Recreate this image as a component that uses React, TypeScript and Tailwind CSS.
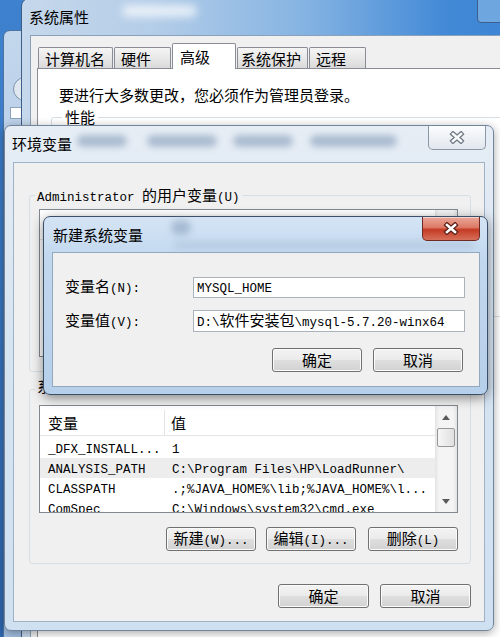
import React from "react";

// CJK runs get the wide face, everything else the half-width mono face (like SimSun)
const CJK = /([\u2E80-\u9FFF\u3000-\u303F\uFF00-\uFFEF]+)/;

function T({ s }: { s: string }) {
  return (
    <span className="whitespace-pre leading-[16px]">
      {s.split(CJK).map((part, i) =>
        part === "" ? null : CJK.test(part) ? (
          <span key={i} className="font-['Noto_Sans_CJK_SC',sans-serif] text-[15px] leading-[16px]">
            {part}
          </span>
        ) : (
          <span key={i} className="font-['Liberation_Mono','Noto_Sans_CJK_SC',monospace] text-[12.5px] leading-[16px]">
            {part}
          </span>
        )
      )}
    </span>
  );
}

function CloseX({ fill, stroke }: { fill: string; stroke: string }) {
  return (
    <svg width="16" height="13" viewBox="0 0 16 13">
      <path d="M4 3 L12 10 M12 3 L4 10" stroke={stroke} strokeWidth="5" strokeLinecap="square" fill="none" />
      <path d="M4 3 L12 10 M12 3 L4 10" stroke={fill} strokeWidth="2.6" strokeLinecap="square" fill="none" />
    </svg>
  );
}

function Btn({ label, className = "" }: { label: string; className?: string }) {
  return (
    <div
      className={`flex h-[24px] shrink-0 items-center justify-center rounded-[3px] border border-[#707070] bg-[linear-gradient(180deg,#f3f3f3_0%,#ebebeb_48%,#dedede_52%,#d2d2d2_100%)] text-black shadow-[inset_0_0_0_1px_#fbfbfb] ${className}`}
    >
      <T s={label} />
    </div>
  );
}

function Arrow({ up }: { up?: boolean }) {
  return (
    <svg width="8" height="5" viewBox="0 0 8 5">
      <path d={up ? "M0 5 L4 0 L8 5 Z" : "M0 0 L4 5 L8 0 Z"} fill="#5b5b5b" />
    </svg>
  );
}

const rows = [
  { name: "_DFX_INSTALL...", value: "1" },
  { name: "ANALYSIS_PATH", value: "C:\\Program Files\\HP\\LoadRunner\\" },
  { name: "CLASSPATH", value: ".;%JAVA_HOME%\\lib;%JAVA_HOME%\\l..." },
  { name: "ComSpec", value: "C:\\Windows\\system32\\cmd.exe" },
];

function Scrollbar() {
  return (
    <div className="flex w-[22px] flex-col bg-[linear-gradient(90deg,#e3e3e3_0%,#f4f4f4_18%,#f4f4f4_82%,#e3e3e3_100%)]">
      <div className="flex h-[22px] items-center justify-center">
        <Arrow up />
      </div>
      <div className="mx-[2px] h-[19px] rounded-[2px] border border-[#979797] bg-[linear-gradient(90deg,#f6f6f6,#e0e0e0)]" />
      <div className="flex-1" />
      <div className="flex h-[22px] items-center justify-center">
        <Arrow />
      </div>
    </div>
  );
}

function SystemProperties() {
  const tabs = [
    { label: "计算机名", w: "w-[75px] pl-[6px]" },
    { label: "硬件", w: "w-[57px] pl-[6px]" },
    { label: "高级", w: "w-[64px] pl-[7px]", active: true },
    { label: "系统保护", w: "w-[71px] pl-[3px]" },
    { label: "远程", w: "w-[57px] pl-[6px]" },
  ];
  return (
    <div className="absolute left-[21px] top-[-2px] flex h-[690px] w-[520px] flex-col rounded-t-[8px] border border-[#3f5d86] bg-[linear-gradient(90deg,#c6d8eb_0%,#b4cde8_25%,#84b3e2_55%,#4289d6_82%,#3b84d4_100%)]">
      <div className="relative h-[36px] shrink-0">
        <div className="absolute left-[100px] top-[6px] h-[12px] w-[75px] rounded-full bg-white/70 blur-[4px]" />
        <div className="relative flex h-full items-center pl-[7px]">
          <T s="系统属性" />
        </div>
        <div className="absolute left-[455px] top-[-1px] h-[25px] w-[50px] rounded-b-[4px] border border-[#3b5f90] bg-[#6ea6df]" />
      </div>
      <div className="flex-1 px-[8px]">
        <div className="flex h-full flex-col border border-[#8aa1bb] bg-[#f0f0f0] pl-[6px] pt-[7px]">
          <div className="flex h-[25px] shrink-0 items-end gap-[1px] pl-[1px]">
            {tabs.map((t) =>
              t.active ? (
                <div
                  key={t.label}
                  className={`relative z-10 -mb-[1px] flex h-[26px] items-center rounded-t-[2px] border border-b-0 border-[#898c95] bg-white ${t.w}`}
                >
                  <T s={t.label} />
                </div>
              ) : (
                <div
                  key={t.label}
                  className={`flex h-[21px] items-center rounded-t-[2px] border border-b-0 border-[#898c95] bg-[linear-gradient(180deg,#f5f5f5_0%,#e8e8e8_50%,#dadada_100%)] pt-[1px] ${t.w}`}
                >
                  <T s={t.label} />
                </div>
              )
            )}
          </div>
          <div className="flex-1 border border-[#898c95] bg-white">
            <div className="pl-[21px] pt-[18px]">
              <T s="要进行大多数更改，您必须作为管理员登录。" />
            </div>
            <div className="relative ml-[13px] mr-[12px] mt-[14px] h-[200px] rounded-[3px] border border-[#d5dfe5]">
              <div className="absolute left-[10px] top-[-9px] bg-white px-[3px]">
                <T s="性能" />
              </div>
            </div>
            <div className="ml-[10px] mt-[327px] flex items-start">
              <div className="w-[272px] pt-[3px] text-[#555]">
                <T s="启动和故障恢复" />
              </div>
              <Btn label="设置(T)..." className="w-[90px]" />
            </div>
          </div>
        </div>
      </div>
    </div>
  );
}

function EnvWindow() {
  return (
    <div className="absolute left-[4px] top-[125px] flex h-[506px] w-[490px] flex-col rounded-[7px] border border-[#71859c] bg-[linear-gradient(180deg,#e6edf5_0%,#d7e4f1_40%,#cfe0f1_100%)] shadow-[0_2px_10px_rgba(0,0,0,0.35)]">
      <div className="relative h-[36px] shrink-0">
        <div className="absolute left-[72px] top-[9px] h-[12px] w-[50px] rounded-full bg-[#9db1c8]/80 blur-[3px]" />
        <div className="absolute left-[142px] top-[9px] h-[12px] w-[70px] rounded-full bg-[#9db1c8]/80 blur-[3px]" />
        <div className="absolute left-[228px] top-[9px] h-[12px] w-[60px] rounded-full bg-[#9db1c8]/80 blur-[3px]" />
        <div className="absolute left-[305px] top-[9px] h-[12px] w-[87px] rounded-full bg-[#9db1c8]/80 blur-[3px]" />
        <div className="relative flex h-full items-center pl-[7px]">
          <T s="环境变量" />
        </div>
        <div className="absolute left-[423px] top-[0px] flex h-[24px] w-[58px] items-center justify-center rounded-b-[5px] border border-t-0 border-[#8b97a5] bg-[linear-gradient(180deg,#fbfcfd_0%,#eef2f6_50%,#e1e7ee_100%)]">
          <CloseX fill="#f7f9fb" stroke="#6e7782" />
        </div>
      </div>
      <div className="mx-[8px] h-[460px] border border-[#9fb1c5] bg-[#f0f0f0]">
        {/* user variables (list hidden behind the dialog) */}
        <div className="relative ml-[15px] mt-[32px] h-[177px] w-[442px] rounded-[3px] border border-[#d5dfe5]">
          <div className="absolute left-[5px] top-[-9px] bg-[#f0f0f0] px-[2px]">
            <T s="Administrator 的用户变量(U)" />
          </div>
          <div className="ml-[9px] mt-[13px] flex h-[148px] w-[419px] border border-[#828790] bg-white">
            <div className="h-[30px] flex-1 border-b border-[#e5e5e5]" />
            <Scrollbar />
          </div>
        </div>
        {/* system variables */}
        <div className="relative ml-[15px] mt-[17px] h-[175px] w-[442px] rounded-[3px] border border-[#d5dfe5]">
          <div className="absolute left-[5px] top-[-12px] bg-[#f0f0f0] px-[2px]">
            <T s="系统变量(S)" />
          </div>
          <div className="ml-[9px] mt-[15px] flex h-[108px] w-[419px] overflow-hidden border border-[#828790] bg-white">
            <div className="flex-1">
              <div className="flex h-[30px] border-b border-[#e5e5e5] pt-[4px]">
                <div className="flex w-[125px] items-center border-r border-[#e5e5e5] pl-[8px]">
                  <T s="变量" />
                </div>
                <div className="flex items-center pl-[6px]">
                  <T s="值" />
                </div>
              </div>
              <div className="pt-[2px]">
                {rows.map((r, i) => (
                  <div key={r.name} className={`flex h-[20px] items-center ${i === 1 ? "bg-[#ededed]" : ""}`}>
                    <div className="w-[125px] pl-[8px]">
                      <T s={r.name} />
                    </div>
                    <div className="pl-[7px]">
                      <T s={r.value} />
                    </div>
                  </div>
                ))}
              </div>
            </div>
            <Scrollbar />
          </div>
          <div className="ml-[9px] mt-[14px] flex w-[419px] justify-end">
            <Btn label="新建(W)..." className="w-[90px]" />
            <Btn label="编辑(I)..." className="ml-[10px] w-[90px]" />
            <Btn label="删除(L)" className="ml-[12px] w-[90px]" />
          </div>
        </div>
        <div className="mt-[20px] flex justify-end pr-[13px]">
          <Btn label="确定" className="w-[91px]" />
          <Btn label="取消" className="ml-[11px] w-[91px]" />
        </div>
      </div>
    </div>
  );
}

function NewVarDialog() {
  return (
    <div className="absolute left-[43px] top-[216px] flex h-[179px] w-[445px] flex-col rounded-[7px] border border-[#3b4f69] bg-[linear-gradient(180deg,#d4e4f5_0%,#c1d7ee_25%,#b6cfea_100%)] shadow-[0_3px_12px_rgba(0,0,0,0.45)]">
      <div className="relative h-[35px] shrink-0">
        <div className="absolute left-[127px] top-[3px] h-[15px] w-[20px] rounded-full bg-[#8ea5bf]/60 blur-[3px]" />
        <div className="absolute left-[130px] top-[24px] h-[8px] w-[300px] rounded-full bg-[#9fb6cf]/40 blur-[3px]" />
        <div className="relative flex h-full items-center pl-[9px]">
          <T s="新建系统变量" />
        </div>
        <div className="absolute left-[378px] top-[0px] flex h-[24px] w-[58px] items-center justify-center rounded-b-[5px] border border-t-0 border-[#6e2a22] bg-[linear-gradient(180deg,#eaa89a_0%,#dd7a66_45%,#c43a24_55%,#d6705a_100%)] shadow-[inset_0_1px_0_rgba(255,255,255,0.5)]">
          <CloseX fill="#ffffff" stroke="#5c1f18" />
        </div>
      </div>
      <div className="ml-[8px] h-[135px] w-[428px] border border-[#93a7bd] bg-[#f0f0f0]">
        <div className="mt-[24px] flex h-[21px] items-center">
          <div className="w-[140px] pl-[12px]">
            <T s="变量名(N):" />
          </div>
          <div className="flex h-[21px] w-[272px] items-center border border-[#abb2bc] bg-white pl-[3px]">
            <T s="MYSQL_HOME" />
          </div>
        </div>
        <div className="mt-[12px] flex h-[22px] items-center">
          <div className="w-[140px] pl-[12px]">
            <T s="变量值(V):" />
          </div>
          <div className="flex h-[22px] w-[272px] items-center border border-[#abb2bc] bg-white pl-[3px]">
            <T s="D:\软件安装包\mysql-5.7.20-winx64" />
          </div>
        </div>
        <div className="ml-[219px] mt-[16px] flex">
          <Btn label="确定" className="w-[90px]" />
          <Btn label="取消" className="ml-[11px] w-[90px]" />
        </div>
      </div>
    </div>
  );
}

export default function App() {
  return (
    <div className="relative h-[637px] w-[500px] overflow-hidden bg-[linear-gradient(180deg,#3e82cf_0%,#2c64ad_100%)] font-['Noto_Sans_CJK_SC',sans-serif] text-[15px] leading-[16px] text-black">
      {/* control panel window peeking out on the left */}
      <div className="absolute left-[3px] top-[30px] h-[640px] w-[60px] rounded-tl-[7px] border border-[#4f73a0] bg-[linear-gradient(180deg,#c2d6ec_0%,#9fbde0_100%)]">
        <div className="ml-[9px] mt-[46px] h-[24px] w-[24px] rounded-full border border-[#7d93ad] bg-[#dfe7ef]" />
        <div className="ml-[6px] mt-[6px] h-[12px] w-[20px] border border-[#8ea2b8] bg-white" />
      </div>
      <SystemProperties />
      <EnvWindow />
      <NewVarDialog />
    </div>
  );
}
